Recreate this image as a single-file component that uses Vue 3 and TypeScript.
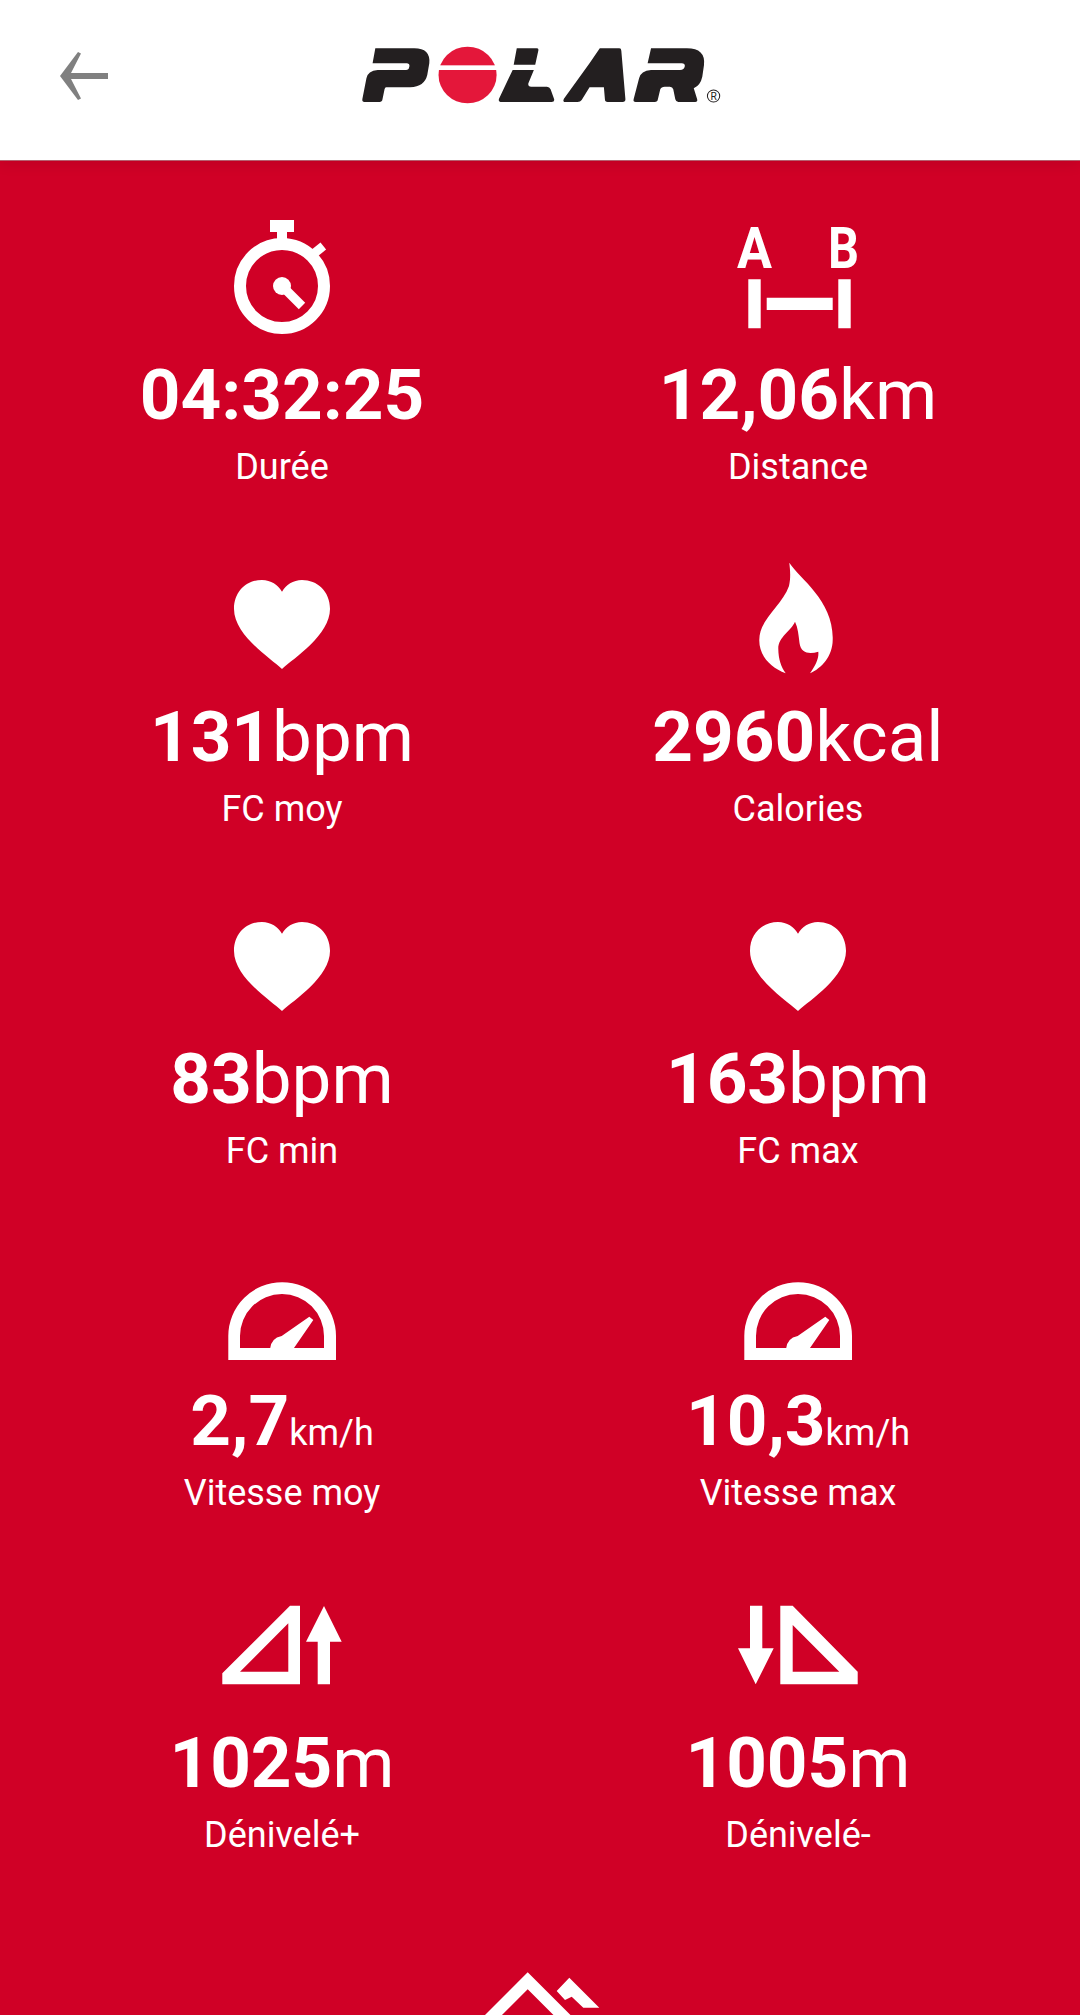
<script setup lang="ts">
interface Stat {
  icon: string
  value: string
  unit?: string
  smallUnit?: boolean
  label: string
}

const stats: Stat[] = [
  { icon: 'timer', value: '04:32:25', label: 'Durée' },
  { icon: 'distance', value: '12,06', unit: 'km', label: 'Distance' },
  { icon: 'heart', value: '131', unit: 'bpm', label: 'FC moy' },
  { icon: 'flame', value: '2960', unit: 'kcal', label: 'Calories' },
  { icon: 'heart', value: '83', unit: 'bpm', label: 'FC min' },
  { icon: 'heart', value: '163', unit: 'bpm', label: 'FC max' },
  { icon: 'gauge', value: '2,7', unit: 'km/h', smallUnit: true, label: 'Vitesse moy' },
  { icon: 'gauge', value: '10,3', unit: 'km/h', smallUnit: true, label: 'Vitesse max' },
  { icon: 'up', value: '1025', unit: 'm', label: 'Dénivelé+' },
  { icon: 'down', value: '1005', unit: 'm', label: 'Dénivelé-' }
]
</script>

<template>
  <div class="screen">
    <header class="topbar">
      <svg class="back" width="48" height="48" viewBox="0 0 48 48">
        <path d="M48 21H11L21 1.500 18 0 0 24l18 24 3-1.500L11 27h37z" fill="#808080" />
      </svg>
      <svg class="logo" width="410" height="90" viewBox="0 0 1200 270" preserveAspectRatio="none">
        <g fill="#231f20">
          <path d="M118 55H232Q280 55 276 100L270 135Q262 170 220 172H150Q146 172 145 178L139 208Q138 216 130 216H86Q79 216 80 208L92 145Q96 122 125 120H208Q216 120 217 112L218 108Q218 100 210 100H110Z" />
          <path d="M532 55H590Q597 55 595 62L586 104H523ZM520 120H582L566 160Q564 170 574 170H620Q628 170 631 178L641 206Q644 216 634 216H488Q477 216 480 206Z" />
          <path d="M775 55H832Q838 55 838 62L850 208Q850 216 842 216H798Q790 216 790 208L787 172H745L722 210Q718 216 710 216H675Q665 216 670 206L745 100Z" />
          <path d="M925 55H1030Q1085 55 1080 105L1075 140Q1070 165 1050 175L1060 208Q1062 216 1054 216H1005Q998 216 996 208L990 178Q988 170 980 170H965Q955 170 952 178L945 208Q944 216 936 216H880Q872 216 874 208L890 145Q895 122 925 120H1010Q1022 120 1024 108Q1024 100 1015 100H915Z" />
        </g>
        <ellipse cx="388" cy="135" rx="85" ry="85" fill="#e4173a" />
        <rect x="295" y="106" width="185" height="14" fill="#fff" />
        <circle cx="1108" cy="198" r="18" fill="none" stroke="#231f20" stroke-width="3" />
        <text x="1108" y="209" class="reg">R</text>
      </svg>
    </header>

    <main class="content">
      <div class="grid">
        <div v-for="stat in stats" :key="stat.label" class="cell">
          <svg class="icon" width="120" height="120" viewBox="0 0 120 120" fill="#fff">
            <g v-if="stat.icon === 'timer'">
              <circle cx="60" cy="69" r="42" fill="none" stroke="#fff" stroke-width="12" />
              <path d="M48 3h24v12H65v10H55V15H48z" />
              <path d="M92.300 36.300 101.300 29" stroke="#fff" stroke-width="9" />
              <circle cx="60" cy="69" r="9" />
              <path d="M60 69 80 89" stroke="#fff" stroke-width="9" />
            </g>
            <g v-else-if="stat.icon === 'distance'">
              <text x="-1" y="51.300" class="ab" textLength="35" lengthAdjust="spacingAndGlyphs">A</text>
              <text x="90" y="51.300" class="ab" textLength="31" lengthAdjust="spacingAndGlyphs">B</text>
              <path d="M10.300 62.300h12.400v49H10.300zM100.300 62.300h12.400v49h-12.400zM28.700 80.700h66v12.300h-66z" />
            </g>
            <path
              v-else-if="stat.icon === 'heart'"
              d="M60 110C48 99 12 76 12 50 12 32 25 21 40 21 49 21 56 26 60 32.700 64 26 71 21 80 21 95 21 108 32 108 50 108 76 72 99 60 110Z"
            />
            <path
              v-else-if="stat.icon === 'flame'"
              d="M51.300 3.700C62 20 96 42 94.700 81 94.500 97 84 109 72 114.300 78 106 81 99 80.300 92.700 72 95 63 95 61.500 84 60.500 76 60 69 57 62.700 53 72 40 78 40.300 90 40.500 100 43 108 47.700 114.300 33 109 21 97 21.300 81 21.300 60 44 47 51 27 53 18 52 10 51.300 3.700Z"
            />
            <g v-else-if="stat.icon === 'gauge'">
              <path fill-rule="evenodd" d="M6.300 117V93A53.800 53.800 0 0 1 114 93V117ZM18 105V93A42 42 0 0 1 102 93V105Z" />
              <path d="M48 106Q49 95 59.700 93L87.300 73.700 91.300 77 71.300 106Z" />
            </g>
            <g v-else-if="stat.icon === 'up'">
              <path fill-rule="evenodd" d="M68 20.700H78V99.300H0.300V88.300ZM66.300 38.300V86.700H18Z" />
              <path d="M102 21 119.700 56.700H108V99.300H95.700V56.700H84Z" />
            </g>
            <g v-else-if="stat.icon === 'down'">
              <path d="M12 20.700H24.300V63.300H35.700L17.700 99.300 0 63.300H12Z" />
              <path fill-rule="evenodd" d="M42.300 20.700H54.700L119.700 86.700V99.300H42.300ZM54.700 40V86.700H101.300Z" />
            </g>
          </svg>
          <div class="value">
            <b>{{ stat.value }}</b><span v-if="stat.unit" :class="{ small: stat.smallUnit }">{{ stat.unit }}</span>
          </div>
          <div class="label">{{ stat.label }}</div>
        </div>
      </div>

      <svg class="mountain" width="120" height="52" viewBox="0 0 120 52" fill="#fff">
        <path d="M0 65.500 47.700 17.800 100 70" fill="none" stroke="#fff" stroke-width="12" />
        <path d="M89.300 14.700 119.300 44.700H103.300L91.700 33.700 85 37 76.700 28Z" />
      </svg>
    </main>
  </div>
</template>

<style>
html,
body {
  margin: 0;
  background: #d00026;
}
</style>

<style scoped>
.screen {
  height: 2015px;
  overflow: hidden;
  font-family: Roboto, sans-serif;
  color: #fff;
}

.topbar {
  position: relative;
  z-index: 1;
  height: 161px;
  box-sizing: border-box;
  padding-bottom: 10px;
  background: #fff;
  border-bottom: 1px solid #b5606f;
  display: flex;
  align-items: center;
  justify-content: center;
  box-shadow: 0 2px 14px rgba(0, 0, 0, 0.1);
}

.back {
  position: absolute;
  left: 60px;
  top: 52px;
}

.reg {
  font-family: Roboto, sans-serif;
  font-size: 30px;
  text-anchor: middle;
  fill: #231f20;
}

.content {
  background: #d00026;
  padding: 56px 24px 0;
  display: flex;
  flex-direction: column;
  align-items: center;
}

.grid {
  width: 100%;
  display: grid;
  grid-template-columns: 1fr 1fr;
  grid-auto-rows: 342px;
}

.cell {
  display: flex;
  flex-direction: column;
  align-items: center;
}

.icon {
  display: block;
  overflow: visible;
}

.ab {
  font-family: Roboto, sans-serif;
  font-weight: 700;
  font-size: 58px;
  fill: #fff;
}

.value {
  margin-top: 16px;
  font-size: 71px;
  line-height: 84px;
  height: 84px;
  white-space: nowrap;
}

.value b {
  font-weight: 700;
}

.value .small {
  font-size: 36px;
  line-height: 1;
}

.label {
  margin-top: 9px;
  font-size: 36px;
  line-height: 42px;
}

.mountain {
  display: block;
  margin-top: 36px;
  flex: none;
}
</style>
